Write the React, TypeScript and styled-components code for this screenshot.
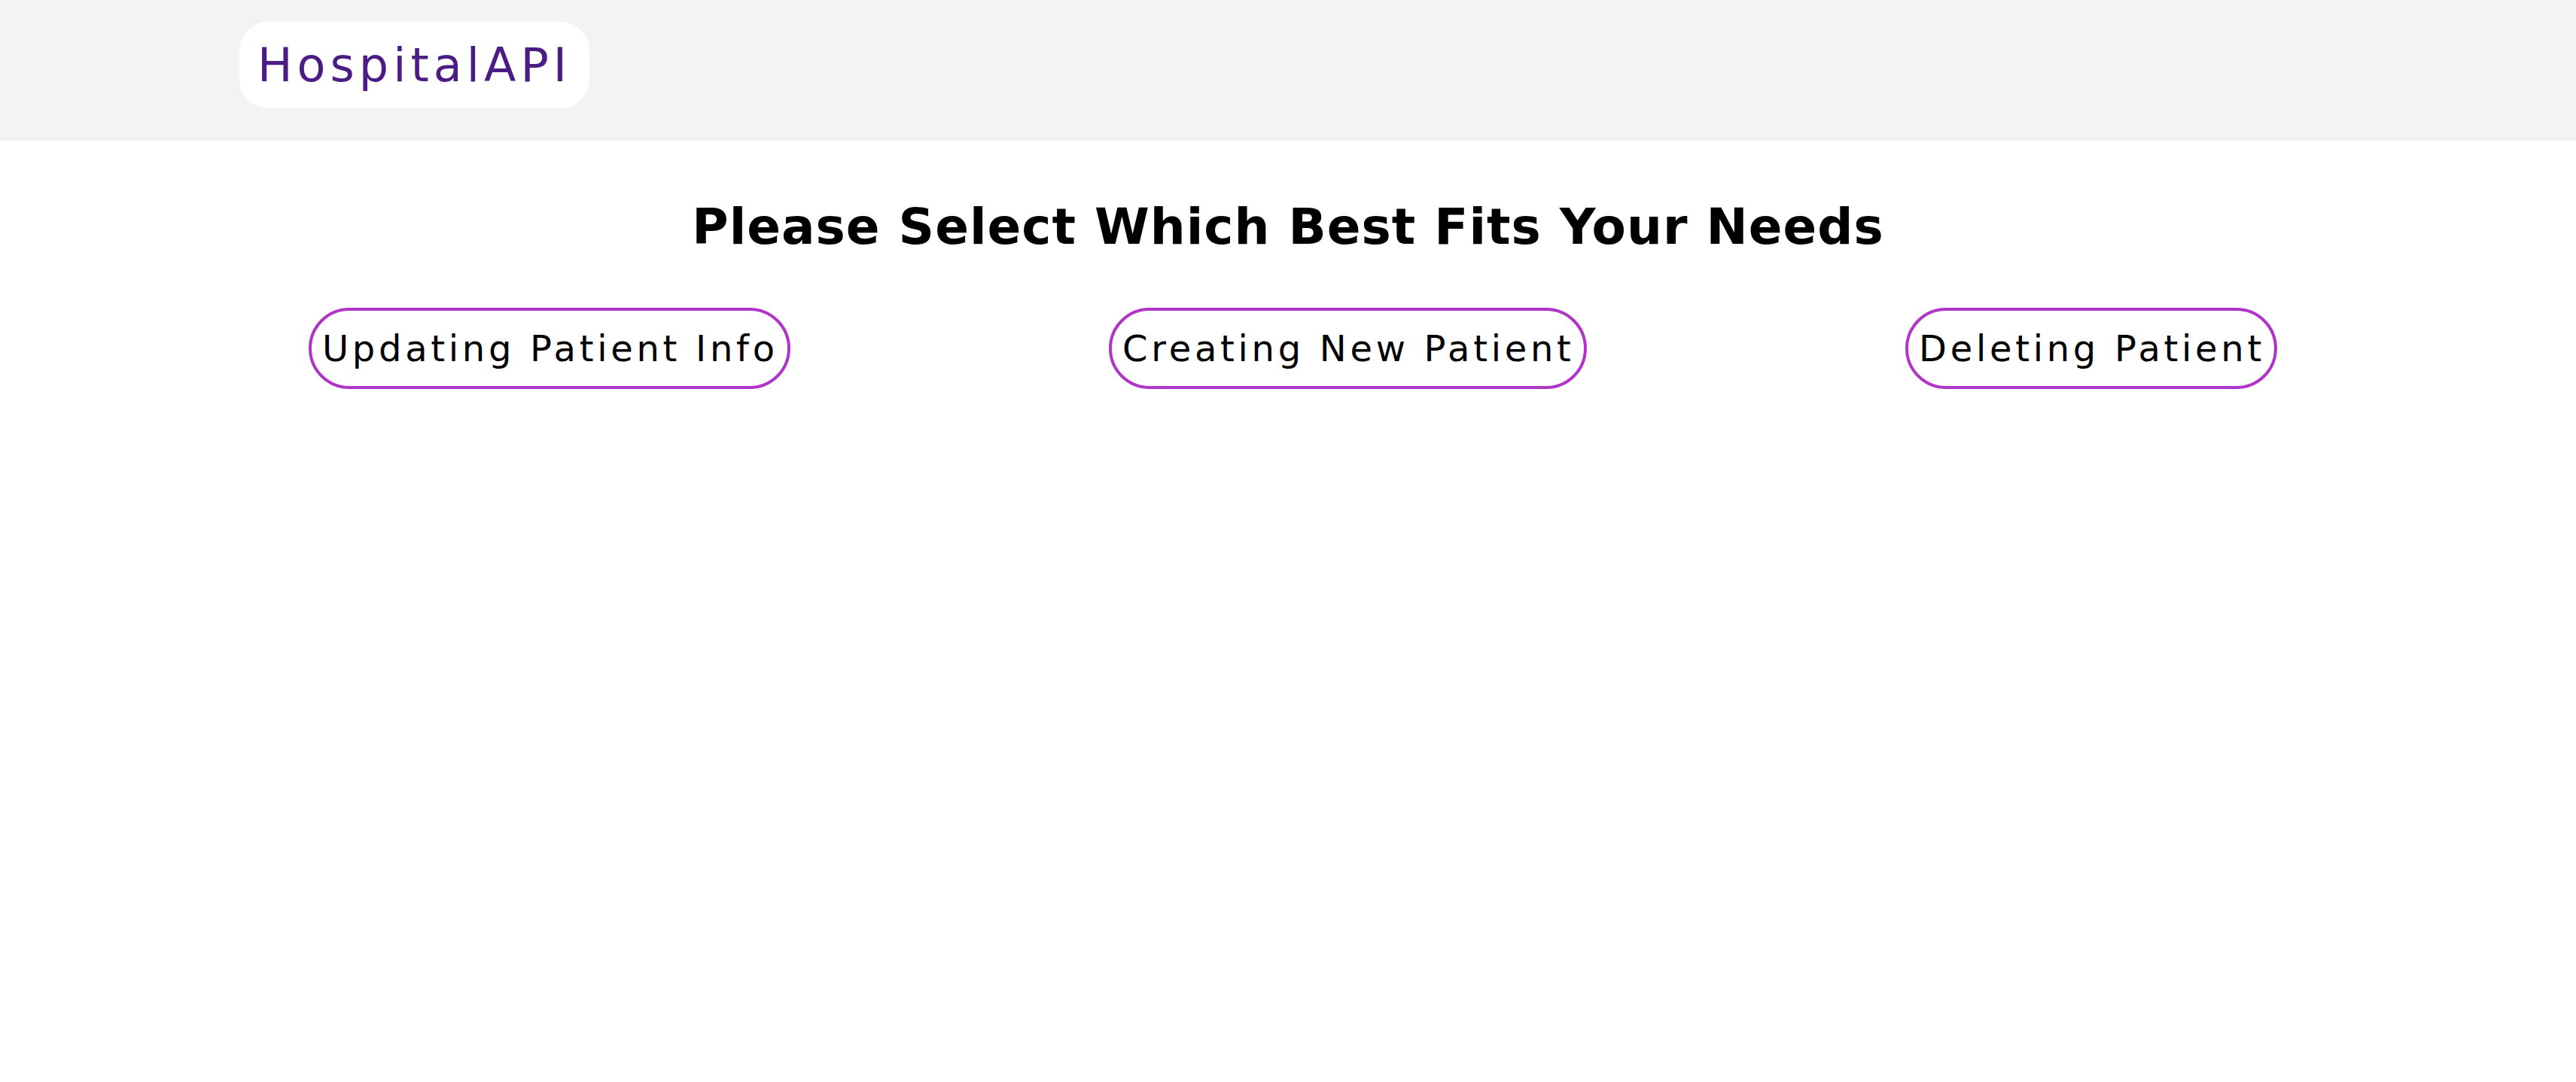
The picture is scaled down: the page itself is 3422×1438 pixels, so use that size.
import React from 'react'
import styled, { createGlobalStyle } from 'styled-components'

const GlobalStyle = createGlobalStyle`
  html, body {
    margin: 0;
    padding: 0;
    background: #ffffff;
    font-family: "DejaVu Sans", "Liberation Sans", sans-serif;
  }
`

const Header = styled.header`
  height: 187px;
  box-sizing: border-box;
  background-color: #f3f3f3;
  padding: 29px 0 0 318px;
`

const Logo = styled.div`
  display: inline-flex;
  align-items: center;
  height: 115px;
  box-sizing: border-box;
  padding: 0 24px;
  background: #ffffff;
  border-radius: 38px;
  color: #4b1c84;
  font-size: 62px;
  letter-spacing: 6px;
`

const Main = styled.main`
  display: flex;
  flex-direction: column;
  align-items: stretch;
`

const Title = styled.h1`
  margin: 75px 0 0;
  text-align: center;
  font-size: 66px;
  font-weight: 700;
  letter-spacing: 1px;
  line-height: 1.2;
  color: #000;
`

const Choices = styled.div`
  display: flex;
  justify-content: space-between;
  padding: 0 397px 0 410px;
  margin-top: 68px;
`

const Choice = styled.button`
  height: 108px;
  box-sizing: border-box;
  padding: 0 12px 0 14px;
  background: #ffffff;
  border: 4px solid #b034c8;
  border-radius: 54px;
  font-family: "DejaVu Sans", "Liberation Sans", sans-serif;
  font-size: 48px;
  letter-spacing: 4.7px;
  color: #000;
  cursor: pointer;
`

const choices = ['Updating Patient Info', 'Creating New Patient', 'Deleting Patient']

export default function App() {
  return (
    <>
      <GlobalStyle />
      <Header>
        <Logo>HospitalAPI</Logo>
      </Header>
      <Main>
        <Title>Please Select Which Best Fits Your Needs</Title>
        <Choices>
          {choices.map((c) => (
            <Choice key={c}>{c}</Choice>
          ))}
        </Choices>
      </Main>
    </>
  )
}
